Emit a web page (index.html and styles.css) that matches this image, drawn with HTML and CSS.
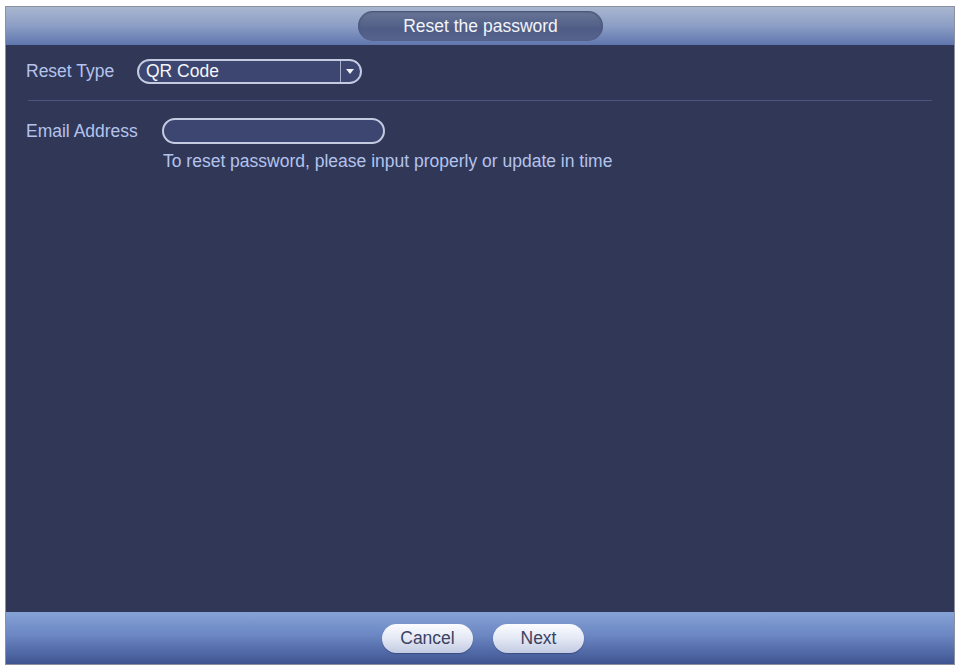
FILE: index.html
```html
<!DOCTYPE html>
<html>
<head>
<meta charset="utf-8">
<link rel="stylesheet" href="styles.css">
</head>
<body>
<div class="window">
  <div class="titlebar">
    <div class="title-pill">Reset the password</div>
  </div>
  <div class="content">
    <div class="row row-type">
      <span class="label label-type">Reset Type</span>
      <div class="select">
        <span class="select-value">QR Code</span>
        <span class="select-btn"><span class="tri"></span></span>
      </div>
    </div>
    <div class="divider"></div>
    <div class="row row-email">
      <span class="label label-email">Email Address</span>
      <div class="field-col">
        <div class="input"></div>
        <div class="hint">To reset password, please input properly or update in time</div>
      </div>
    </div>
  </div>
  <div class="footer">
    <button class="btn">Cancel</button>
    <button class="btn">Next</button>
  </div>
</div>
</body>
</html>
```
FILE: styles.css
```css
html, body {
  margin: 0;
  padding: 0;
  background: #ffffff;
  font-family: "Liberation Sans", Arial, sans-serif;
}
body {
  padding: 6px 0 0 5px;
}
.window {
  width: 950px;
  height: 659px;
  box-sizing: border-box;
  border: 1px solid #8c90a0;
  background: #313857;
  display: flex;
  flex-direction: column;
}
.titlebar {
  height: 38px;
  background: linear-gradient(to bottom, #a9b6cf 0%, #8c9ec6 50%, #5f76ad 100%);
  display: flex;
  justify-content: center;
  align-items: center;
  padding-left: 1px;
}
.title-pill {
  width: 245px;
  height: 30px;
  border-radius: 15px;
  background: linear-gradient(to bottom, #6a7698 0%, #4f5c85 60%, #56648e 100%);
  box-shadow: inset 0 1px 2px rgba(30, 40, 70, 0.5);
  color: #f2f4fa;
  font-size: 17.5px;
  display: flex;
  align-items: center;
  justify-content: center;
}
.content {
  flex: 1;
  padding: 14px 22px 0 20px;
}
.row {
  display: flex;
  align-items: flex-start;
}
.label {
  color: #b4c3ee;
  font-size: 17.5px;
  line-height: 25px;
}
.label-type { width: 111px; }
.label-email { width: 136px; line-height: 26px; }
.select {
  width: 225px;
  height: 25px;
  box-sizing: border-box;
  border: 2px solid #c4cbe0;
  border-radius: 13px;
  background: #3d4670;
  display: flex;
  align-items: center;
}
.select-value {
  flex: 1;
  color: #f4f6fb;
  font-size: 17.5px;
  padding-left: 7px;
}
.select-btn {
  width: 17px;
  height: 100%;
  border-left: 1px solid #a7afc8;
  display: flex;
  align-items: center;
  justify-content: center;
  padding-right: 2px;
}
.tri {
  width: 0;
  height: 0;
  border-left: 4px solid transparent;
  border-right: 4px solid transparent;
  border-top: 5px solid #f0f2f8;
}
.divider {
  height: 1px;
  background: #4c5580;
  margin: 16px 0 17px 2px;
}
.field-col {
  display: flex;
  flex-direction: column;
}
.input {
  width: 223px;
  height: 26px;
  box-sizing: border-box;
  border: 2px solid #c4cbe0;
  border-radius: 13px;
  background: #3d4670;
}
.hint {
  color: #b4c3ee;
  font-size: 17.5px;
  line-height: 20px;
  margin-top: 7px;
  margin-left: 1px;
}
.footer {
  height: 52px;
  background: linear-gradient(to bottom, #86a2d6 0%, #6b86c2 45%, #3f5592 100%);
  display: flex;
  justify-content: center;
  align-items: center;
  gap: 20px;
  padding-left: 6px;
}
.btn {
  width: 91px;
  height: 29px;
  border: none;
  border-radius: 15px;
  background: linear-gradient(to bottom, #fbfcff 0%, #e3e8f4 50%, #c3cbe2 100%);
  box-shadow: 0 1px 1px rgba(30, 40, 80, 0.4);
  color: #3b4262;
  font-family: "Liberation Sans", Arial, sans-serif;
  font-size: 17.5px;
  padding: 0;
}
```
